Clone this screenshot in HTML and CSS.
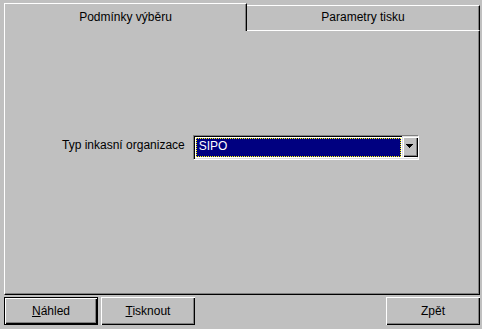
FILE: index.html
```html
<!DOCTYPE html>
<html lang="cs">
<head>
    <meta charset="UTF-8">
    <title>Tisk - podmínky výběru</title>
    <link rel="stylesheet" href="styles.css">
</head>
<body>
    <div class="dialog">
        <div class="tabs">
            <div class="tab active">Podmínky výběru</div>
            <div class="tab">Parametry tisku</div>
        </div>
        <div class="panel">
            <div class="field-row">
                <label class="label">Typ inkasní organizace</label>
                <div class="combo">
                    <div class="combo-value"><span>SIPO</span></div>
                    <div class="combo-btn">
                        <svg width="7" height="4" viewBox="0 0 7 4" shape-rendering="crispEdges"><path d="M0 0h7v1H0z M1 1h5v1H1z M2 2h3v1H2z M3 3h1v1H3z" fill="#000"/></svg>
                    </div>
                </div>
            </div>
        </div>
        <div class="buttons">
            <button class="btn default"><u>N</u>áhled</button>
            <button class="btn"><u>T</u>isknout</button>
            <button class="btn back">Zpět</button>
        </div>
    </div>
</body>
</html>
```

FILE: styles.css
```css
*{margin:0;padding:0;box-sizing:border-box}
body{background:#c0c0c0;font-family:"Liberation Sans",Arial,sans-serif;font-size:12px;color:#000;width:482px;height:329px;overflow:hidden}
.dialog{padding:3px 2px 0 4px;display:flex;flex-direction:column}

/* tabs */
.tabs{display:flex;align-items:flex-end;height:28px}
.tab{line-height:14px;text-align:center;white-space:nowrap}
.tab.active{width:243px;height:28px;padding-top:6px;border-top:1px solid #fff;border-left:1px solid #fff;border-right:1px solid #000;box-shadow:inset -1px 0 #808080}
.tab:not(.active){width:233px;height:26px;padding-top:4px;padding-left:0;border-top:1px solid #fff;border-bottom:1px solid #fff;border-right:1px solid #000;box-shadow:inset -1px 0 #808080}

/* panel */
.panel{height:264px;border-left:1px solid #fff;border-right:1px solid #000;border-bottom:1px solid #000;box-shadow:inset -1px -1px #808080;padding:104px 0 0 57px}
.field-row{display:flex;align-items:flex-start;gap:8px}
.label{margin-top:3px;line-height:14px;white-space:nowrap}
.combo{display:flex;width:226px;height:25px;background:#fff;border-top:1px solid #808080;border-left:1px solid #808080;border-bottom:1px solid #fff;border-right:1px solid #fff;box-shadow:inset 1px 1px #000,inset -1px -1px #dfdfdf;padding:1px 1px 1px 1px}
.combo-value{flex:1;margin:1px;background:#000080;border:1px dotted #ff0;color:#fff;padding-left:2px;line-height:15px}
.combo-btn{width:16px;height:21px;margin:-1px -1px -1px 0;background:#c0c0c0;box-shadow:inset 1px 1px #dfdfdf,inset 2px 2px #fff,inset -1px -1px #000,inset -2px -2px #808080;display:flex;align-items:center;justify-content:center;padding-bottom:1px}
.combo-btn svg{display:block}

/* bottom buttons */
.buttons{display:flex;gap:3px;margin-top:2px}
.btn{width:94px;height:28px;background:#c0c0c0;border:none;font:inherit;color:#000;box-shadow:inset 1px 1px #fff,inset -1px -1px #000,inset -2px -2px #808080}
.btn.default{border:1px solid #000;box-shadow:inset 1px 1px #fff,inset -1px -1px #000,inset -2px -2px #808080}
.btn.back{margin-left:auto}
.btn u{text-decoration:underline}
```
